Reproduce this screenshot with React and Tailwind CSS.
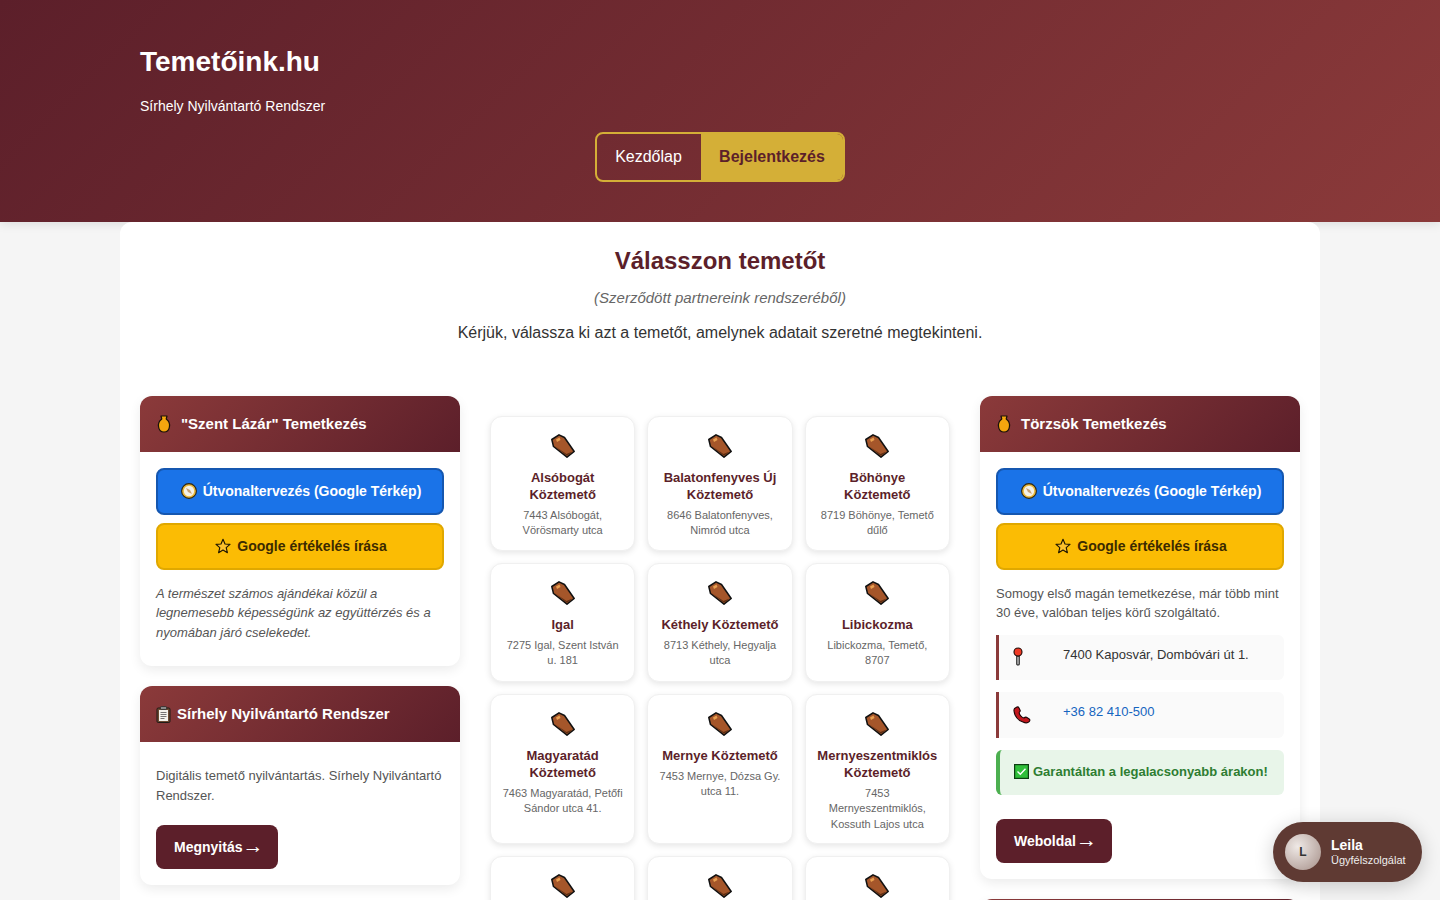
import React from "react";

const cemeteries = [
  { name: "Alsóbogát Köztemető", address: "7443 Alsóbogát, Vörösmarty utca" },
  { name: "Balatonfenyves Új Köztemető", address: "8646 Balatonfenyves, Nimród utca" },
  { name: "Böhönye Köztemető", address: "8719 Böhönye, Temető dűlő" },
  { name: "Igal", address: "7275 Igal, Szent István u. 181" },
  { name: "Kéthely Köztemető", address: "8713 Kéthely, Hegyalja utca" },
  { name: "Libickozma", address: "Libickozma, Temető, 8707" },
  { name: "Magyaratád Köztemető", address: "7463 Magyaratád, Petőfi Sándor utca 41." },
  { name: "Mernye Köztemető", address: "7453 Mernye, Dózsa Gy. utca 11." },
  { name: "Mernyeszentmiklós Köztemető", address: "7453 Mernyeszentmiklós, Kossuth Lajos utca" },
  { name: "", address: "" },
  { name: "", address: "" },
  { name: "", address: "" },
];

const CoffinIcon = () => (
  <svg width="24" height="24" viewBox="0 0 24 24" className="mx-auto">
    <path d="M0.8 5.5 L8 0.8 L13.5 3.5 L23.2 17.5 L16 23.2 L2.5 12.5 Z" fill="#a5562a" stroke="#111" strokeWidth="1.5" strokeLinejoin="round" />
    <path d="M3.5 12 L16 21.8 L22 17.2 L15.5 20 Z" fill="#5a2c12" />
    <path d="M5 5.5 L8.5 3.5 L9.5 6 L6 8 Z" fill="#e8a050" />
  </svg>
);

const UrnIcon = () => (
  <svg width="16" height="18" viewBox="0 0 16 18">
    <path d="M5 1 H11 L10.2 4 C13 6 14 9 13.4 12 C13 15 11 17 8 17 C5 17 3 15 2.6 12 C2 9 3 6 5.8 4 Z" fill="#f5a60e" stroke="#1a1208" strokeWidth="1.2" strokeLinejoin="round" />
  </svg>
);

const CompassIcon = () => (
  <svg width="16" height="16" viewBox="0 0 16 16" className="shrink-0">
    <circle cx="8" cy="8" r="7.4" fill="#e8b83c" stroke="#2b2412" strokeWidth="1.1" />
    <circle cx="8" cy="8" r="5.2" fill="#f3f1e8" />
    <path d="M5 5 L9 7 L11 11 L7 9 Z" fill="#c9a070" />
  </svg>
);

const StarIcon = () => (
  <svg width="16" height="16" viewBox="0 0 24 24" className="shrink-0">
    <path d="M12 2 L15 9 L22.5 9.6 L16.8 14.5 L18.6 22 L12 18 L5.4 22 L7.2 14.5 L1.5 9.6 L9 9 Z" fill="#fbc02d" stroke="#1c1400" strokeWidth="1.7" strokeLinejoin="round" />
  </svg>
);

const ClipboardIcon = () => (
  <svg width="15" height="17" viewBox="0 0 15 17" className="shrink-0">
    <rect x="1" y="2" width="13" height="14.5" rx="1.2" fill="#6b4a32" stroke="#1e1a16" />
    <rect x="3" y="4" width="9" height="11" fill="#f4f4ee" />
    <rect x="4.5" y="0.5" width="6" height="3" rx="0.8" fill="#8a8a8a" stroke="#222" strokeWidth="0.7" />
    <path d="M4.5 6.5 H10.5 M4.5 8.5 H10.5 M4.5 10.5 H10.5 M4.5 12.5 H8.5" stroke="#555" strokeWidth="0.8" />
  </svg>
);

const PinIcon = () => (
  <svg width="10" height="19" viewBox="0 0 10 19">
    <path d="M3.8 9 H6.2 V17.2 C6.2 18.2 3.8 18.2 3.8 17.2 Z" fill="#ddd" stroke="#111" strokeWidth="1.1" />
    <circle cx="5" cy="5" r="4" fill="#ef3a25" stroke="#1a0a08" strokeWidth="1.1" />
  </svg>
);

const PhoneIcon = () => (
  <svg width="18" height="18" viewBox="0 0 18 18">
    <path d="M1.5 2.5 L4 1 C5 0.7 5.5 1 6 2 L7.2 4.5 C7.4 5.3 7 5.8 6.2 6.4 C6 8.4 8.8 11.6 11 12 C12 11 12.8 10.9 13.5 11.3 L16.2 13 C17.2 13.8 17 14.8 16.2 15.6 C14.8 17 12.5 17.2 10 16 C5 14 1.5 9.5 1 5 C0.9 4 1 3.2 1.5 2.5 Z" fill="#c3161c" stroke="#1d0506" strokeWidth="1.1" strokeLinejoin="round" />
  </svg>
);

const CheckIcon = () => (
  <svg width="15" height="15" viewBox="0 0 15 15" className="shrink-0">
    <rect x="0.6" y="0.6" width="13.8" height="13.8" fill="#2fbf3a" stroke="#0b3f10" strokeWidth="1.2" />
    <path d="M3.5 7.5 L6.3 10.3 L11.5 4.8" fill="none" stroke="#fff" strokeWidth="1.4" />
  </svg>
);

const PanelHeader = ({ icon, title, gap = "gap-[9px]" }) => (
  <div className={`flex h-14 items-center ${gap} rounded-t-xl bg-[linear-gradient(135deg,#8b3a3a,#5c1f2a)] px-4 text-[15px] font-bold text-white`}>
    {icon}
    <span>{title}</span>
  </div>
);

const GoogleButtons = () => (
  <div className="flex flex-col gap-2">
    <a className="flex h-[47px] items-center justify-center gap-1.5 rounded-lg border-2 border-[#1557b0] bg-[#1a73e8] pb-0.5 pl-0.5 text-sm font-bold text-white">
      <CompassIcon />
      Útvonaltervezés (Google Térkép)
    </a>
    <a className="flex h-[47px] items-center justify-center gap-1.5 rounded-lg border-2 border-[#e0a800] bg-[#fbbc04] pb-0.5 pl-0.5 text-sm font-bold text-[#3c2a00]">
      <StarIcon />
      Google értékelés írása
    </a>
  </div>
);

const DarkButton = ({ children }) => (
  <a className="inline-flex h-11 items-center rounded-lg bg-[#5c1f2a] px-[18px] text-sm font-bold text-white">
    {children}
    <span className="w-[18px] pb-[3px] text-[21px] leading-none font-normal">→</span>
  </a>
);

const Panel = ({ children, className = "" }) => (
  <div className={`rounded-xl bg-white shadow-[0_4px_12px_rgba(0,0,0,0.08)] ${className}`}>{children}</div>
);

const CemeteryCard = ({ name, address }) => (
  <div className="rounded-xl border border-[#f0f0f0] bg-white px-2.5 pt-[17px] text-center shadow-[0_2px_6px_rgba(0,0,0,0.1)]">
    <CoffinIcon />
    <h3 className="mt-[11px] text-[13px] leading-[17px] font-bold text-[#5c1f2a]">{name}</h3>
    <p className="mt-[5px] text-[11px] leading-[15.4px] text-[#666]">{address}</p>
  </div>
);

const App = () => {
  return (
    <div className="relative h-screen overflow-hidden bg-[#f5f5f5] font-['Liberation_Sans',Arial,sans-serif] text-[#333]">
      <header className="h-[222px] bg-[linear-gradient(135deg,#5c1f2a,#8b3a3a)] shadow-[0_2px_10px_rgba(0,0,0,0.1)]">
        <div className="mx-auto max-w-[1200px] px-5 pt-[45px] text-white">
          <h1 className="text-[28px] leading-[34px] font-bold">Temetőink.hu</h1>
          <p className="mt-[19px] text-sm leading-[16px]">Sírhely Nyilvántartó Rendszer</p>
          <nav className="mt-[18px] flex justify-center">
            <div className="flex h-[50px] overflow-hidden rounded-lg border-2 border-[#d4af37]">
              <a className="flex w-[104px] items-center justify-center pr-px text-base">Kezdőlap</a>
              <a className="flex w-[142px] items-center justify-center bg-[#d4af37] text-base font-bold text-[#5c1f2a]">Bejelentkezés</a>
            </div>
          </nav>
        </div>
      </header>

      <main className="mx-auto max-w-[1200px] rounded-t-xl bg-white px-5 pb-5">
        <section className="pt-6 text-center">
          <h2 className="text-2xl leading-[30px] font-bold text-[#5c1f2a]">Válasszon temetőt</h2>
          <p className="mt-[13px] text-[15px] leading-[18px] text-[#666] italic">(Szerződött partnereink rendszeréből)</p>
          <p className="mt-[17px] text-base leading-[18px] text-[#333]">Kérjük, válassza ki azt a temetőt, amelynek adatait szeretné megtekinteni.</p>
        </section>

        <div className="mt-[54px] grid grid-cols-[320px_1fr_320px] gap-5">
          <aside className="flex flex-col gap-5">
            <Panel>
              <PanelHeader icon={<UrnIcon />} title={'"Szent Lázár" Temetkezés'} />
              <div className="p-4 pb-6">
                <GoogleButtons />
                <p className="mt-[13.5px] text-[13px] leading-[19.5px] text-[#555] italic">
                  A természet számos ajándékai közül a legnemesebb képességünk az együttérzés és a nyomában járó cselekedet.
                </p>
              </div>
            </Panel>
            <Panel>
              <PanelHeader icon={<ClipboardIcon />} title="Sírhely Nyilvántartó Rendszer" gap="gap-1.5" />
              <div className="px-4 pt-6 pb-4">
                <p className="text-[13px] leading-[19.5px] text-[#555]">Digitális temető nyilvántartás. Sírhely Nyilvántartó Rendszer.</p>
                <div className="mt-5">
                  <DarkButton>Megnyitás</DarkButton>
                </div>
              </div>
            </Panel>
          </aside>

          <section className="grid grid-cols-3 grid-rows-[135px_119px_150px_150px] content-start gap-3 p-2.5 pt-5">
            {cemeteries.map((c, i) => (
              <CemeteryCard key={i} name={c.name} address={c.address} />
            ))}
          </section>

          <aside className="flex flex-col gap-5">
            <Panel>
              <PanelHeader icon={<UrnIcon />} title="Törzsök Temetkezés" />
              <div className="p-4">
                <GoogleButtons />
                <p className="mt-[13.5px] text-[13px] leading-[19.5px] text-[#555]">
                  Somogy első magán temetkezése, már több mint 30 éve, valóban teljes körű szolgáltató.
                </p>
                <div className="mt-3 flex h-[45px] rounded-r-md border-l-[3px] border-[#8b3a3a] bg-[#fafafa] pt-3 pl-3.5 text-[13px] leading-[15px]">
                  <span className="w-[50px]"><PinIcon /></span>
                  <span>7400 Kaposvár, Dombóvári út 1.</span>
                </div>
                <div className="mt-3 flex h-[46px] rounded-r-md border-l-[3px] border-[#8b3a3a] bg-[#fafafa] pt-3 pl-3.5 text-[13px] leading-[15px]">
                  <span className="w-[50px] pt-[2px]"><PhoneIcon /></span>
                  <span className="text-[#1565c0]">+36 82 410-500</span>
                </div>
                <div className="mt-3 flex h-[45px] items-start gap-1 rounded-md border-l-[4px] border-[#4caf50] bg-[#e8f5e9] pt-[14px] pl-3.5 text-[13px] font-bold text-[#2e7d32]">
                  <CheckIcon />
                  <span className="leading-[15px]">Garantáltan a legalacsonyabb árakon!</span>
                </div>
                <div className="mt-6">
                  <DarkButton>Weboldal</DarkButton>
                </div>
              </div>
            </Panel>
            <Panel className="h-14">
              <div className="h-14 rounded-t-xl bg-[linear-gradient(135deg,#8b3a3a,#5c1f2a)]" />
            </Panel>
          </aside>
        </div>
      </main>

      <div className="absolute top-[822px] left-[1273px] flex h-[60px] w-[149px] items-center gap-2.5 rounded-full bg-[#5f3a33] pl-3 shadow-[0_4px_20px_rgba(0,0,0,0.2)]">
        <div className="flex h-9 w-9 items-center justify-center rounded-full bg-[radial-gradient(circle_at_35%_35%,#efe9e6,#a58f88)] text-xs font-bold text-[#333]">L</div>
        <div className="text-white">
          <div className="text-sm leading-[16px] font-bold">Leila</div>
          <div className="text-[11px] leading-[14px] text-[#eee]">Ügyfélszolgálat</div>
        </div>
      </div>
    </div>
  );
};

export default App;
